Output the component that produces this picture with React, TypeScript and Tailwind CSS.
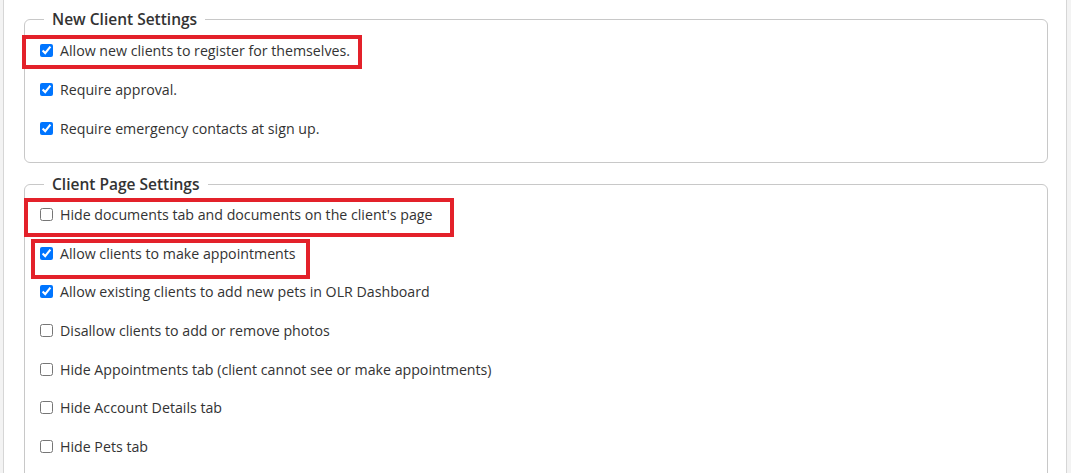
import React from "react";

const newClient = [
  { label: "Allow new clients to register for themselves.", checked: true },
  { label: "Require approval.", checked: true },
  { label: "Require emergency contacts at sign up.", checked: true },
];

const clientPage = [
  { label: "Hide documents tab and documents on the client's page", checked: false },
  { label: "Allow clients to make appointments", checked: true },
  { label: "Allow existing clients to add new pets in OLR Dashboard", checked: true },
  { label: "Disallow clients to add or remove photos", checked: false },
  { label: "Hide Appointments tab (client cannot see or make appointments)", checked: false },
  { label: "Hide Account Details tab", checked: false },
  { label: "Hide Pets tab", checked: false },
];

function Row({ label, checked, h }: { label: string; checked: boolean; h: string }) {
  return (
    <label className={`flex items-center gap-[7px] ${h}`}>
      <input
        type="checkbox"
        defaultChecked={checked}
        className="w-[13px] h-[13px] accent-[#0075ff] shrink-0"
      />
      <span>{label}</span>
    </label>
  );
}

export default function App() {
  return (
    <div
      className="min-h-[473px] bg-[#f3f3f3] pl-[3px] pr-[4px] text-[14.2px] text-[#333]"
      style={{ fontFamily: '"Open Sans", "Noto Sans", sans-serif' }}
    >
      <div className="relative min-h-[473px] bg-white border-x border-[#d6d6d6] pl-[20px] pr-[18px] pt-[9px]">
        {/* New client settings */}
        <fieldset className="border border-[#c8c8c8] rounded-[6px] pl-[15px] pt-[2px] pb-[14px]">
          <legend className="ml-1 px-2 text-[15.5px] font-semibold leading-[20px]">New Client Settings</legend>
          {newClient.map((r) => (
            <Row key={r.label} {...r} h="h-[39px]" />
          ))}
        </fieldset>

        {/* Client page settings */}
        <fieldset className="mt-[11px] border border-[#c8c8c8] rounded-[6px] pl-[15px] pt-[1.5px] pb-[15px]">
          <legend className="ml-1 px-2 text-[15.5px] font-semibold leading-[20px]">Client Page Settings</legend>
          {clientPage.map((r) => (
            <Row key={r.label} {...r} h="h-[38.6px]" />
          ))}
        </fieldset>

        {/* Annotation boxes */}
        <div className="absolute left-[18px] top-[35px] w-[340px] h-[34px] border-4 border-[#e3212a]" />
        <div className="absolute left-[20px] top-[198px] w-[430px] h-[39px] border-4 border-[#e3212a]" />
        <div className="absolute left-[27px] top-[239px] w-[279px] h-[40px] border-4 border-[#e3212a]" />
      </div>
    </div>
  );
}
